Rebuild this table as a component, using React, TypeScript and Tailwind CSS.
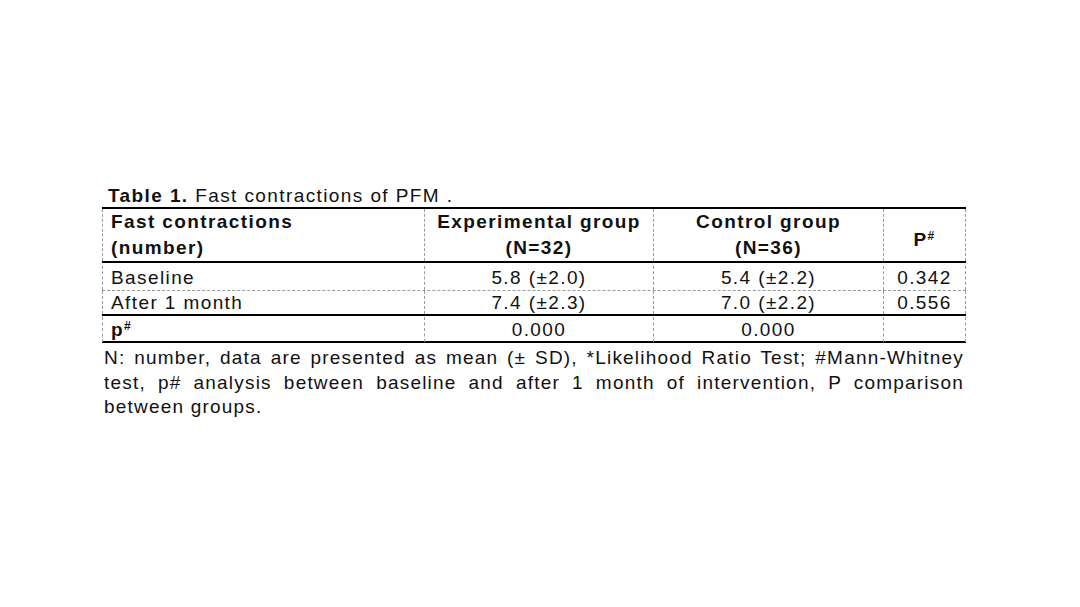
const row = "grid grid-cols-[322px_229px_230px_83px]";
const cell = "border-l border-dashed border-[#9a9a9a]";
const lastCell = "border-x border-dashed border-[#9a9a9a]";

const bodyRows = [
  { label: "Baseline", exp: "5.8 (±2.0)", ctrl: "5.4 (±2.2)", p: "0.342" },
  { label: "After 1 month", exp: "7.4 (±2.3)", ctrl: "7.0 (±2.2)", p: "0.556" },
];

export default function App() {
  return (
    <div className="min-h-screen w-full bg-white text-[#111] font-['Liberation_Sans',Arial,sans-serif] text-[19px] tracking-[1.4px]">
      <div className="w-[966px] pl-[102px] pt-[185px]">
        {/* Caption */}
        <p className="h-[22px] pl-[6px] leading-[22px] whitespace-nowrap">
          <span className="font-bold">Table 1.</span> Fast contractions of PFM .
        </p>

        {/* Table */}
        <div className="w-[864px] border-t-2 border-black">
          {/* Header */}
          <div className={`${row} h-[54px] border-b-2 border-black font-bold leading-[26px]`}>
            <div className={`${cell} pl-[8px]`}>
              <div>Fast contractions</div>
              <div>(number)</div>
            </div>
            <div className={`${cell} text-center`}>
              <div>Experimental group</div>
              <div>(N=32)</div>
            </div>
            <div className={`${cell} text-center`}>
              <div>Control group</div>
              <div>(N=36)</div>
            </div>
            <div className={`${lastCell} flex items-center justify-center pt-[10px]`}>
              <span>
                P<sup className="text-[12px]">#</sup>
              </span>
            </div>
          </div>

          {/* Body */}
          {bodyRows.map((r, i) => (
            <div
              key={r.label}
              className={
                i === 0
                  ? `${row} h-[28px] border-b border-dashed border-[#9a9a9a] pt-[3px] leading-[24px]`
                  : `${row} h-[25px] border-b-2 border-black leading-[23px]`
              }
            >
              <div className={`${cell} pl-[8px]`}>{r.label}</div>
              <div className={`${cell} text-center`}>{r.exp}</div>
              <div className={`${cell} text-center`}>{r.ctrl}</div>
              <div className={`${lastCell} text-center`}>{r.p}</div>
            </div>
          ))}

          {/* p# row */}
          <div className={`${row} h-[27px] border-b-2 border-black leading-[25px] pt-[1px]`}>
            <div className={`${cell} pl-[8px] font-bold`}>
              p<sup className="text-[12px]">#</sup>
            </div>
            <div className={`${cell} text-center`}>0.000</div>
            <div className={`${cell} text-center`}>0.000</div>
            <div className={lastCell}></div>
          </div>
        </div>

        {/* Footnote */}
        <div className="mt-[3px] w-[864px] px-[2px] leading-[24.5px] tracking-[1.2px]">
          <div className="text-justify [text-align-last:justify]">
            N: number, data are presented as mean (± SD), *Likelihood Ratio Test; #Mann-Whitney
          </div>
          <div className="text-justify [text-align-last:justify]">
            test, p# analysis between baseline and after 1 month of intervention, P comparison
          </div>
          <div>between groups.</div>
        </div>
      </div>
    </div>
  );
}
